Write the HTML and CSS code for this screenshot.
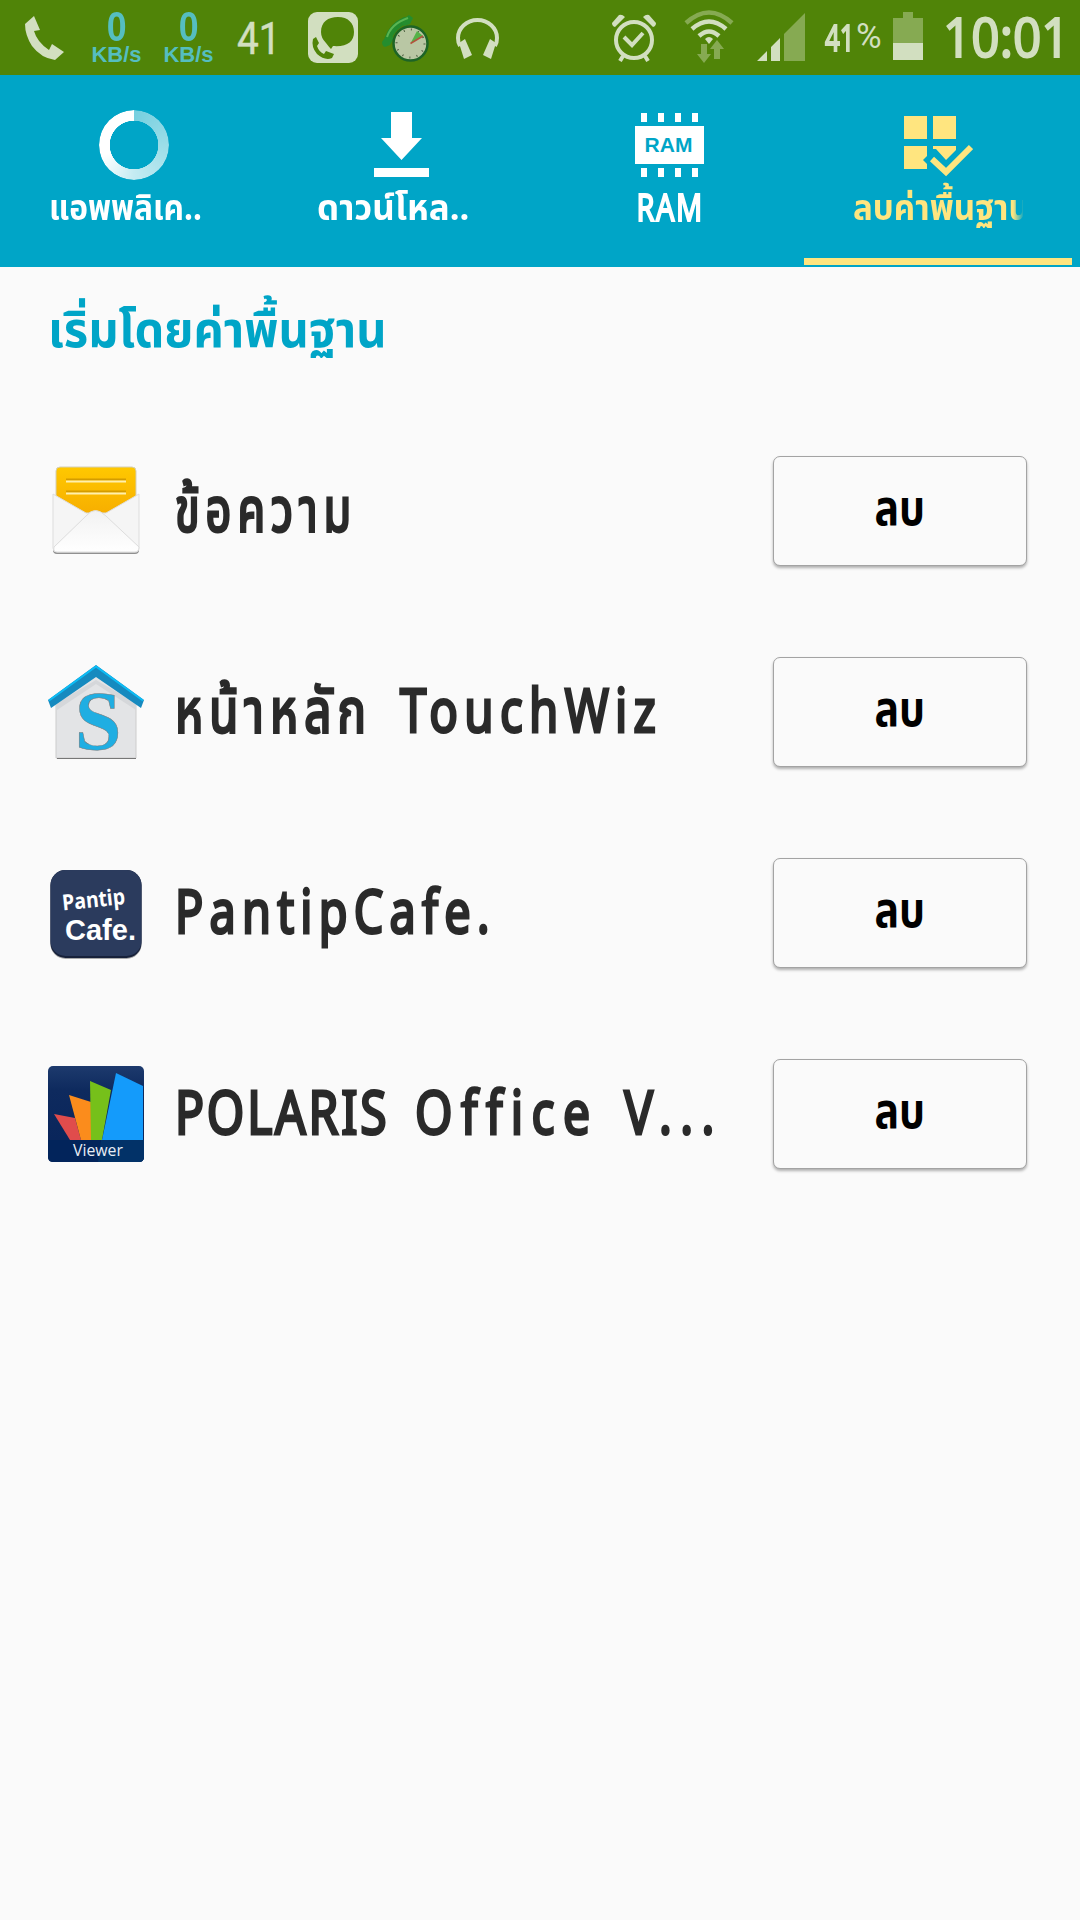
FILE: index.html
```html
<!DOCTYPE html>
<html lang="th">
<head>
  <meta charset="UTF-8">
  <meta name="viewport" content="width=device-width, initial-scale=1.0">
  <title>Task Manager</title>
  <link rel="stylesheet" href="styles.css">
</head>
<body>

  <!-- Status bar -->
  <div class="status-bar">
    <div class="status-left">
      <svg class="ic-phone" width="40" height="46" viewBox="0 0 40 46"><path d="M0 8L9 0L15 14L9 15Q12 26 24 34L27 28L39 36L30 44Q16 42 7 30Q0 19 0 8Z" fill="#d2dfc0"/></svg>
      <div class="speed"><b>0</b><span>KB/s</span></div>
      <div class="speed"><b>0</b><span>KB/s</span></div>
      <div class="temp">41</div>
      <svg class="ic-line" width="50" height="51" viewBox="0 0 50 51">
        <rect width="50" height="51" rx="9" fill="#d2dfc0"/>
        <path d="M30 5C40 5 46 11 46 20C46 30 39 35 25 34L23 37Q21 35 18 31Q13 26 13 20C13 10 20 5 30 5Z" fill="#508408"/>
        <path d="M5 27L8 25L11 31L9 34Q11 40 16 42L18 39L26 42L24 46Q17 49 9 42Q3 35 5 27Z" fill="#508408"/>
      </svg>
      <svg class="ic-timer" width="48" height="48" viewBox="0 0 48 48">
        <path d="M6 24Q10 11 24 5" fill="none" stroke="#238a2d" stroke-width="7"/>
        <path d="M18 6L27 0L31 3L28 9L22 11ZM0 27L5 20L12 23L8 30L3 32Q0 31 0 27Z" fill="#248d2e"/>
        <path d="M5 22Q9 9 26 3" fill="none" stroke="#5ab552" stroke-width="2"/>
        <circle cx="28.500" cy="28.500" r="17" fill="#b9c7a4" stroke="#1d6426" stroke-width="2.500"/>
        <circle cx="28.500" cy="28.500" r="14" fill="none" stroke="#4d5d40" stroke-width="2" stroke-dasharray="1 6.330"/>
        <path d="M28.500 28.500L35 16L41 21Z" fill="#55b248"/>
        <path d="M28.500 28.500L41 21" stroke="#b3533d" stroke-width="1.500"/>
      </svg>
      <svg class="ic-headphones" width="43" height="42" viewBox="0 0 43 42">
        <path d="M4 28Q2 25 2 20A19.500 18 0 0 1 41 20Q41 25 39 28" fill="none" stroke="#d2dfc0" stroke-width="4"/>
        <path d="M3 25L9 21L16 37L8 41ZM40 25L34 21L27 37L35 41Z" fill="#d2dfc0"/>
      </svg>
    </div>
    <div class="status-right">
      <svg class="ic-alarm" width="44" height="48" viewBox="0 0 44 48">
        <g fill="none" stroke="#d2dfc0">
          <circle cx="22" cy="26" r="18" stroke-width="4"/>
          <path d="M12 23L20 31L31 19" stroke-width="4"/>
          <path d="M11 42L8 47M33 42L36 47" stroke-width="4"/>
        </g>
        <path d="M0 9L7 1Q10 0 13 3L3 13Q0 12 0 9ZM44 9L37 1Q34 0 31 3L41 13Q44 12 44 9Z" fill="#d2dfc0"/>
      </svg>
      <svg class="ic-wifi" width="50" height="53" viewBox="0 0 50 53">
        <g fill="none" stroke="#d2dfc0" stroke-width="4.500">
          <path d="M2 13Q25 -8 48 13" stroke="#86aa52"/>
          <path d="M8 19Q25 4 42 19"/>
          <path d="M15 26Q25 17 35 26"/>
        </g>
        <path d="M21 29Q25 25 29 29L25 34Z" fill="#d2dfc0"/>
        <path d="M17 34H23V44H27L20 53L13 44H17ZM30 49H36V39H40L33 30L26 39H30Z" fill="#86aa52"/>
      </svg>
      <svg class="ic-signal" width="48" height="48" viewBox="0 0 48 48">
        <path d="M0 48L10 38V48ZM14 48V34L23 25V48Z" fill="#d2dfc0"/>
        <path d="M27 48V21L48 0V48Z" fill="#86aa52"/>
      </svg>
      <div class="percent"><b>41</b><span>%</span></div>
      <svg class="ic-battery" width="30" height="48" viewBox="0 0 30 48">
        <path d="M10 0H20V6H30V31H0V6H10Z" fill="#86aa52"/>
        <path d="M0 31H30V48H0Z" fill="#d2dfc0"/>
      </svg>
      <div class="clock"><span>10:01</span></div>
    </div>
  </div>

  <!-- Tabs -->
  <div class="tabs">
    <div class="tab">
      <div class="tab-icon"><div class="ring"></div></div>
      <div class="tab-label label-apps"><span>แอพพลิเค..</span></div>
    </div>
    <div class="tab">
      <div class="tab-icon">
        <svg width="70" height="70" viewBox="0 0 70 70" fill="#fff"><path d="M24 2H45V28H55L34.500 50L14 28H24ZM7 58H62V67H7Z"/></svg>
      </div>
      <div class="tab-label label-download"><span>ดาวน์โหล..</span></div>
    </div>
    <div class="tab">
      <div class="tab-icon">
        <svg width="70" height="70" viewBox="0 0 70 70">
          <path d="M6 3h6v9h-6zM23 3h6v9h-6zM40 3h6v9h-6zM57 3h6v9h-6zM0 16H69V54H0zM6 58h6v9h-6zM23 58h6v9h-6zM40 58h6v9h-6zM57 58h6v9h-6z" fill="#fff"/>
          <text class="ram-text" x="33.500" y="42" text-anchor="middle">RAM</text>
        </svg>
      </div>
      <div class="tab-label label-ram"><span>RAM</span></div>
    </div>
    <div class="tab active">
      <div class="tab-icon">
        <svg width="70" height="70" viewBox="0 0 70 70" fill="#ffe57f">
          <path d="M1 6H24V29H1ZM30 6H53V29H30ZM1 36H24V46L20 50L24 54V59H1ZM30 36H53V40L43 50L33 39H30Z"/>
          <path d="M29 49L43 62L68 37" fill="none" stroke="#ffe57f" stroke-width="6"/>
        </svg>
      </div>
      <div class="tab-label label-defaults"><span>ลบค่าพื้นฐาน</span></div>
    </div>
  </div>

  <!-- Default apps -->
  <h2 class="section-title"><span>เริ่มโดยค่าพื้นฐาน</span></h2>

  <div class="app-list">
    <div class="app-item">
      <svg class="app-icon" viewBox="0 0 96 96">
        <defs>
          <linearGradient id="paper" x2="0" y2="1"><stop offset="0" stop-color="#ffc800"/><stop offset="1" stop-color="#f5a800"/></linearGradient>
          <linearGradient id="envelope" x2="0" y2="1"><stop offset="0" stop-color="#f2f2f2"/><stop offset="1" stop-color="#fff"/></linearGradient>
        </defs>
        <path d="M5 36V87Q5 91 9 91H87Q91 91 91 87V36L58 57H38Z" fill="#909090"/>
        <path d="M8 62V8Q8 4 12 4H84Q88 4 88 8V62Z" fill="url(#paper)" stroke="#d4cfb8"/>
        <path d="M18 16.500H78M18 28.500H78" stroke="#d39c00" stroke-width="2"/>
        <path d="M18 18.500H78M18 30.500H78" stroke="#fff0ad" stroke-width="2"/>
        <path d="M5 31L38 50L58 50L91 31V84Q91 89 87 89H9Q5 89 5 85Z" fill="#f5f5f5" stroke="#ddd"/>
        <path d="M6 84L38 53Q47 42 58 53L91 84Q91 89 87 89H9Q5 89 6 84Z" fill="url(#envelope)" stroke="#ddd"/>
      </svg>
      <div class="app-text"><span class="app-name name-message">ข้อความ</span></div>
      <button class="clear-btn"><span>ลบ</span></button>
    </div>

    <div class="app-item">
      <svg class="app-icon" viewBox="0 0 96 96">
        <path d="M8 94V38L48 10L88 38V94Z" fill="#e3e4e6" stroke="#ccc"/>
        <path d="M9 94.500H88" stroke="#777"/>
        <path d="M9 39L48 16L88 39V46L48 20L9 46Z" fill="#d5d7da"/>
        <path d="M0 36L48 1L96 36L93 44L48 13L3 44Z" fill="#168abf"/>
        <path d="M1 36.500L48 2.500L95 36.500" fill="none" stroke="#0cbcf5" stroke-width="2"/>
        <text class="house-s" x="50" y="86" text-anchor="middle">S</text>
      </svg>
      <div class="app-text"><span class="app-name name-home">หน้าหลัก</span><span class="app-name name-touchwiz">TouchWiz</span></div>
      <button class="clear-btn"><span>ลบ</span></button>
    </div>

    <div class="app-item">
      <svg class="app-icon" viewBox="0 0 96 96">
        <rect x="2.500" y="6" width="91" height="88" rx="15" fill="#a9a9a9"/>
        <rect x="2.500" y="5" width="91" height="88" rx="15" fill="#17213a"/>
        <rect x="2.500" y="5" width="91" height="86" rx="15" fill="#2b3b5d"/>
        <text class="pantip-text" transform="translate(15 45.500) rotate(-6)" textLength="63" lengthAdjust="spacingAndGlyphs">Pantip</text>
        <text class="cafe-text" x="17" y="74.500" textLength="71" lengthAdjust="spacingAndGlyphs">Cafe.</text>
      </svg>
      <div class="app-text"><span class="app-name name-pantip">PantipCafe.</span></div>
      <button class="clear-btn"><span>ลบ</span></button>
    </div>

    <div class="app-item">
      <svg class="app-icon" viewBox="0 0 96 96">
        <defs>
          <linearGradient id="navy" x2="0" y2="1"><stop offset="0" stop-color="#1d3a6d"/><stop offset=".25" stop-color="#0e2a5e"/><stop offset="1" stop-color="#08245a"/></linearGradient>
        </defs>
        <rect width="96" height="96" rx="5" fill="url(#navy)"/>
        <path d="M6 48L27 52L33 74H22Z" fill="#e04c4c"/>
        <path d="M21 29L43 36V74H33Z" fill="#fb8c1c"/>
        <path d="M42 15L63 24L54 74H43Z" fill="#76c01a"/>
        <path d="M68 7L95 20V74H54Z" fill="#149bfb"/>
        <path d="M0 74H96V91Q96 96 91 96H5Q0 96 0 91Z" fill="#02245b"/>
        <path d="M53 74H96V91Q96 96 91 96H50Z" fill="#023268"/>
        <text class="viewer-text" x="25" y="90" textLength="50" lengthAdjust="spacingAndGlyphs">Viewer</text>
      </svg>
      <div class="app-text"><span class="app-name name-polaris"><span class="caps">POLARIS</span> Office V...</span></div>
      <button class="clear-btn"><span>ลบ</span></button>
    </div>
  </div>

</body>
</html>
```
FILE: styles.css
```css
* {
  margin: 0;
  padding: 0;
  box-sizing: border-box;
}

body {
  width: 1080px;
  height: 1920px;
  background-color: #fafafa;
  font-family: "Noto Sans", "Noto Sans Thai", sans-serif;
  color: #2a2a2a;
  overflow: hidden;
}

svg {
  display: block;
  flex: none;
}

/* Status bar */
.status-bar {
  height: 75px;
  display: flex;
  justify-content: space-between;
  background-color: #508408;
  color: #d2dfc0;
  padding: 0 17px 0 25px;
}

.status-left,
.status-right {
  display: flex;
  align-items: flex-start;
}

.ic-phone {
  margin-top: 16px;
  margin-right: 27px;
}

.speed {
  width: 49px;
  margin: 6px 23px 0 0;
  display: flex;
  flex-direction: column;
  align-items: center;
  font-family: "Liberation Sans", Arial, sans-serif;
  font-weight: bold;
  color: #55bec0;
}

.speed b {
  font-size: 42px;
  line-height: 41px;
  transform: scaleX(0.85);
}

.speed span {
  font-size: 22px;
  line-height: 16px;
}

.temp {
  width: 37px;
  margin: 16px 32px 0 3px;
  font-family: Roboto, sans-serif;
  font-size: 45px;
  line-height: 45px;
  transform: translateX(-2px) scaleX(0.86);
  transform-origin: left;
  -webkit-text-stroke: 0.5px #d2dfc0;
}

.ic-line {
  margin: 12px 24px 0 0;
}

.ic-timer {
  margin: 15px 26px 0 0;
}

.ic-headphones {
  margin-top: 18px;
}

.ic-alarm {
  margin: 14px 28px 0 0;
}

.ic-wifi {
  margin: 10px 23px 0 0;
}

.ic-signal {
  margin: 13px 20px 0 0;
}

.percent {
  width: 58px;
  height: 36px;
  margin: 18px 10px 0 0;
  display: flex;
  font-family: Roboto, sans-serif;
  font-size: 35px;
  line-height: 38px;
  white-space: nowrap;
}

.percent b {
  flex: none;
  width: 31px;
  font-family: "Noto Sans", sans-serif;
  font-size: 37px;
  font-weight: normal;
  -webkit-text-stroke: 2px #d2dfc0;
  transform: scaleX(0.7);
  transform-origin: left;
}

.ic-battery {
  margin: 12px 24px 0 0;
}

.clock {
  width: 116px;
  margin-top: 8px;
  font-size: 55px;
  line-height: 56px;
  -webkit-text-stroke: 2px #d2dfc0;
  white-space: nowrap;
}

.clock span {
  display: inline-block;
  transform: translateX(-4px) scaleX(0.9);
  transform-origin: left;
}

/* Tabs */
.tabs {
  height: 192px;
  display: flex;
  padding-right: 8px;
  background-color: #00a5c7;
  color: #fff;
}

.tab {
  width: 268px;
  display: flex;
  flex-direction: column;
  align-items: center;
  padding-top: 35px;
  border-bottom: 7px solid transparent;
  margin-bottom: 2px;
}

.tab.active {
  color: #ffe57f;
  border-bottom-color: #ffe57f;
}

.tab-icon {
  width: 70px;
  height: 70px;
}

.ring {
  width: 70px;
  height: 70px;
  border-radius: 50%;
  background: conic-gradient(#75cfdf, #a0dfe9 28%, #c4ebf2 50%, #e2f6f9 60%, #fff 70%);
  -webkit-mask: radial-gradient(circle, transparent 24px, #000 24.5px);
  mask: radial-gradient(circle, transparent 24px, #000 24.5px);
}

.ram-text {
  font: bold 21px "Liberation Sans", Arial, sans-serif;
  fill: #00a5c7;
}

.tab-label {
  width: 170px;
  height: 60px;
  line-height: 53px;
  font-size: 36px;
  font-weight: bold;
  white-space: nowrap;
}

.tab-label span {
  display: inline-block;
  transform-origin: left;
}

.label-apps span {
  transform: scaleX(0.88);
}

.label-download span {
  transform: scaleX(0.97);
}

.label-ram {
  font-size: 38px;
  font-weight: normal;
  letter-spacing: 2px;
  text-align: center;
  -webkit-text-stroke: 2px #fff;
}

.label-ram span {
  transform: scaleX(0.76);
  transform-origin: center;
}

.label-defaults {
  overflow: hidden;
  -webkit-mask: linear-gradient(to right, #000 160px, transparent 171px);
  mask: linear-gradient(to right, #000 160px, transparent 171px);
}

.label-defaults span {
  transform: scaleX(0.92);
}

/* Content */
.section-title {
  height: 143px;
  padding: 17px 0 0 48px;
  font-size: 50px;
  line-height: 88px;
  color: #00a5c7;
  white-space: nowrap;
}

.section-title span {
  display: inline-block;
  transform: scaleX(0.94);
  transform-origin: left;
}

.app-item {
  height: 201px;
  display: flex;
  align-items: center;
  padding: 0 53px 0 48px;
}

.app-icon {
  width: 96px;
  height: 96px;
  margin-right: 31px;
}

.app-text {
  flex: 1;
  min-width: 0;
  display: flex;
  padding-bottom: 6px;
}

.app-name {
  flex: none;
  font-size: 60px;
  line-height: 100px;
  white-space: nowrap;
  letter-spacing: 8px;
  -webkit-text-stroke: 3px #2a2a2a;
  transform-origin: left;
}

.name-message {
  transform: scaleX(0.75);
}

.name-home {
  width: 225px;
  transform: scaleX(0.79);
}

.name-touchwiz {
  transform: scaleX(0.79);
}

.name-pantip {
  transform: scaleX(0.78);
}

.name-polaris {
  letter-spacing: 10.5px;
  word-spacing: 6px;
  transform: scaleX(0.8);
}

.caps {
  letter-spacing: 3.5px;
}

.clear-btn {
  flex: none;
  width: 254px;
  height: 110px;
  border: 1px solid #a3a3a3;
  border-radius: 7px;
  background-color: #fafafa;
  box-shadow: 0 2px 3px rgba(0, 0, 0, 0.3);
  font-family: inherit;
  font-size: 50px;
  font-weight: bold;
  color: #000;
}

.clear-btn span {
  display: inline-block;
  transform: translateY(-1px) scaleX(0.82);
}

/* Text inside the app icons */
.house-s {
  font: bold 84px "Liberation Serif", "Times New Roman", serif;
  fill: #20aee2;
  stroke: #777;
  stroke-width: 0.5px;
}

.pantip-text {
  font: bold 22px "Noto Sans", sans-serif;
  fill: #fff;
}

.cafe-text {
  font: bold 29px "Liberation Sans", Arial, sans-serif;
  fill: #fff;
}

.viewer-text {
  font: 17px "Open Sans", sans-serif;
  fill: #e8edf5;
}
```
